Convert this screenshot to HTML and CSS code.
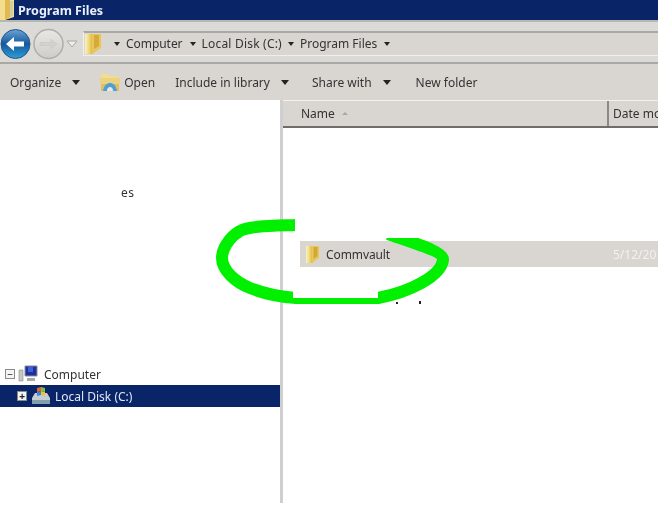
FILE: index.html
```html
<!DOCTYPE html>
<html lang="en">
<head>
<meta charset="utf-8">
<title>Program Files</title>
<link rel="stylesheet" href="styles.css">
</head>
<body>
<div class="window">
  <header class="titlebar">
    <svg class="title-icon" viewBox="0 0 14 20"><path d="M0 0h5l9 0v17l-9 3H0z" fill="#f2dd8e"/><path d="M5 0l5 0v17l-5 3z" fill="#e3b84e"/><path d="M10 1h3v15l-3 1z" fill="#c9cfa8"/></svg>
    <span class="title-text">Program Files</span>
  </header>
  <nav class="addressbar">
    <div class="nav-buttons">
      <svg class="nav-icon" viewBox="0 0 82 32">
        <defs>
          <linearGradient id="bk" x1="0" y1="0" x2="0" y2="1"><stop offset="0" stop-color="#6aa3d4"/><stop offset=".5" stop-color="#14599e"/><stop offset="1" stop-color="#2f9fd6"/></linearGradient>
          <linearGradient id="fw" x1="0" y1="0" x2="0" y2="1"><stop offset="0" stop-color="#e9e7e4"/><stop offset="1" stop-color="#cfcdca"/></linearGradient>
          <linearGradient id="fd" x1="0" y1="0" x2="1" y2="0"><stop offset="0" stop-color="#faf3c0"/><stop offset=".5" stop-color="#f0d878"/><stop offset="1" stop-color="#d9ae3c"/></linearGradient>
        </defs>
        <circle cx="15.500" cy="16" r="14.500" fill="url(#bk)" stroke="#24568c"/>
        <path d="M6 16l8-7v4.500h10v5H14V23z" fill="#fff"/>
        <circle cx="48.500" cy="16" r="14.500" fill="url(#fw)" stroke="#b0aeac" stroke-width="1.500"/>
        <path d="M40 14.500h11v-3l6 4.500-6 4.500v-3H40z" fill="#d4d2cf" stroke="#c4c2bf" stroke-width=".5"/>
        <path d="M67 13h10l-5 6z" fill="#efedea" stroke="#aaa8a6"/>
      </svg>
    </div>
    <div class="address-field">
      <svg class="addr-folder" viewBox="0 0 17 20"><path d="M0 0h8v20H0z" fill="url(#fd)"/><path d="M7 0h9v14l-9 6z" fill="#e8c65a"/><path d="M9 1h5v11l-5 3z" fill="#d6aa38"/></svg>
      <span class="crumb crumb-computer"><i class="caret"></i>Computer</span>
      <span class="crumb crumb-disk"><i class="caret"></i>Local Disk (C:)</span>
      <span class="crumb crumb-program"><i class="caret"></i>Program Files</span>
      <i class="caret"></i>
    </div>
  </nav>
  <div class="toolbar">
    <span class="tool tool-organize">Organize<i class="caret caret-wide"></i></span>
    <span class="tool tool-open">
      <svg class="open-icon" viewBox="0 0 20 19"><path d="M1 1h7l2 2h8v6H1z" fill="#f1dc94"/><path d="M0 5h20v6H0z" fill="#ecd27e"/><path d="M1 11h18v7H1z" fill="#e2bf5e"/><path d="M3 18c1-6 4-8 7-8s6 2 7 8z" fill="#4f9fd6"/><path d="M7 18c0-3 1.500-4 3-4s3 1 3 4z" fill="#e8e8e0"/></svg>Open
    </span>
    <span class="tool tool-library">Include in library<i class="caret caret-wide"></i></span>
    <span class="tool tool-share">Share with<i class="caret caret-wide"></i></span>
    <span class="tool">New folder</span>
  </div>
  <main class="panes">
    <aside class="tree">
      <div class="stray">es</div>
      <div class="tree-row tree-computer">
        <i class="expander">&#8722;</i>
        <svg class="tree-icon" viewBox="0 0 20 18"><path d="M7 1h12v10H7z" fill="#1f2f9c" stroke="#8a8f9c"/><path d="M10 2h5v5h-5z" fill="#3c62d8"/><path d="M1 5h4v11H1z" fill="#c9c9c4" stroke="#8c8c88" stroke-width=".6"/><path d="M9 13h8v3H9z" fill="#a8a8a4"/></svg>
        <span>Computer</span>
      </div>
      <div class="tree-row tree-disk">
        <i class="expander expander-dark">+</i>
        <svg class="tree-icon" viewBox="0 0 20 18"><path d="M1 11l3-5h12l3 5v6H1z" fill="#c3cdd2"/><path d="M1 13h18v4H1z" fill="#7fa0ac"/><path d="M6 1l4-1v4l-4 1z" fill="#e8632c"/><path d="M10 0l4 1v4l-4-1z" fill="#7fbf3e"/><path d="M6 5l4-1v4l-4 1z" fill="#3d84d6"/><path d="M10 4l4 1v4l-4-1z" fill="#f1c232"/></svg>
        <span>Local Disk (C:)</span>
      </div>
    </aside>
    <div class="divider"></div>
    <section class="list">
      <div class="list-header">
        <div class="col col-name">Name<i class="sort"></i></div>
        <div class="col col-date">Date mo</div>
      </div>
      <div class="list-row">
        <svg class="row-folder" viewBox="0 0 14 17"><path d="M0 0h7v17H0z" fill="url(#fd)"/><path d="M6 0h7v12l-7 5z" fill="#e8c65a"/><path d="M7.500 1h4v9l-4 3z" fill="#d2a835"/></svg>
        <span class="row-name">Commvault</span>
        <span class="row-date">5/12/20</span>
      </div>
    </section>
  </main>
  <svg class="scribble" viewBox="0 0 658 530">
    <defs>
      <clipPath id="scribble-clip"><path d="M200 210H295V232H293V298H378V238H460V310H200z"/></clipPath>
    </defs>
    <path clip-path="url(#scribble-clip)" fill="none" stroke="#00f000" stroke-width="12" stroke-linejoin="round" d="M296 225C270 226 250 226 240 231C228 238 222 250 222 258C222 270 235 282 250 288C265 294 280 297 296 298H378C410 292 441 276 443 260C444 252 420 245 388 234"/>
    <path fill="#222" d="M396 302h2v2h-2zM419 301h2v3h-2z"/>
  </svg>
</div>
</body>
</html>
```
FILE: styles.css
```css
* { box-sizing: border-box; }
html, body { margin: 0; padding: 0; background: #fff; }
.window {
  position: relative;
  width: 658px;
  height: 530px;
  overflow: hidden;
  display: flex;
  flex-direction: column;
  font-family: "Noto Sans", "Open Sans", sans-serif;
  font-size: 12px;
  color: #333;
}
i { font-style: normal; }
.titlebar {
  height: 20px;
  flex: none;
  display: flex;
  align-items: center;
  gap: 4px;
  background: #0a2468;
  color: #e8eefa;
  font-weight: 700;
  font-size: 12.5px;
}
.title-icon { width: 14px; height: 20px; }
.title-text { filter: blur(.3px); }
.addressbar {
  height: 44px;
  flex: none;
  display: flex;
  align-items: center;
  gap: 1px;
  padding: 3px 0 0 0;
  background: #dcdad6;
  border-top: 2px solid #b4b8b4;
  border-bottom: 2px solid #aaa8a5;
}
.nav-buttons { display: flex; }
.nav-icon { width: 82px; height: 32px; display: block; filter: blur(.3px); }
.address-field {
  flex: 1;
  height: 25px;
  margin-top: -1px;
  display: flex;
  align-items: center;
  background: #d9d6d1;
  border-top: 2px solid #aaa8a5;
  border-left: 1px solid #f2f1ee;
  border-bottom: 1px solid #f0efec;
  padding-left: 1px;
  filter: blur(.3px);
}
.addr-folder { width: 17px; height: 20px; margin-right: 12px; }
.crumb { display: flex; align-items: center; }
.crumb-computer { margin-right: 7px; letter-spacing: -.05px; }
.crumb-disk { margin-right: 6px; letter-spacing: .2px; }
.crumb-program { margin-right: 7px; }
.caret {
  display: inline-block;
  width: 0;
  height: 0;
  margin-right: 6px;
  border-left: 3.5px solid transparent;
  border-right: 3.5px solid transparent;
  border-top: 4px solid #222;
}
.toolbar {
  height: 36px;
  flex: none;
  display: flex;
  align-items: center;
  padding-left: 10px;
  background: #d9d6d1;
  filter: blur(.3px);
}
.tool { display: flex; align-items: center; }
.caret-wide {
  margin: 0 0 0 11px;
  border-left-width: 4.5px;
  border-right-width: 4.5px;
  border-top-width: 5px;
}
.tool-organize { margin-right: 20px; }
.tool-open { margin-right: 20px; }
.tool-library { margin-right: 23px; }
.tool-share { margin-right: 25px; }
.open-icon { width: 20px; height: 19px; margin-right: 4px; }
.panes {
  height: 403px;
  flex: none;
  display: flex;
  background: #fff;
}
.tree {
  width: 280px;
  flex: none;
  display: flex;
  flex-direction: column;
  border-top: 1px solid #fff;
}
.stray {
  margin: 83px 0 0 121px;
  height: 17px;
  line-height: 17px;
  font-size: 12px;
  letter-spacing: .5px;
  filter: blur(.3px);
}
.tree-row {
  height: 22px;
  display: flex;
  align-items: center;
}
.tree-computer { margin-top: 162px; padding-left: 5px; }
.tree-disk {
  padding-left: 17px;
  background: #0a2468;
  color: #dfe6f5;
}
.tree-row span { filter: blur(.25px); }
.tree-icon { width: 20px; height: 18px; margin: 0 6px 0 3px; }
.tree-disk .tree-icon { margin: 0 4px 0 4px; }
.expander {
  width: 10px;
  height: 10px;
  flex: none;
  display: flex;
  align-items: center;
  justify-content: center;
  font-size: 10px;
  line-height: 1;
  background: #f4f4f2;
  border: 1px solid #8a8a88;
  color: #222;
}
.expander-dark { background: #f4f4f2; font-weight: 700; }
.divider { width: 3px; flex: none; background: #cfcfcf; }
.list { flex: 1; min-width: 0; overflow: hidden; display: flex; flex-direction: column; }
.list-header {
  height: 28px;
  flex: none;
  display: flex;
  background: #d9d6d1;
  border-top: 1px solid #f2f1ee;
  border-bottom: 2px solid #6e6d6b;
  filter: blur(.25px);
}
.col { display: flex; align-items: center; flex: none; }
.col-name { width: 326px; padding-left: 18px; border-right: 2px solid #8a8987; }
.col-date { padding-left: 4px; white-space: nowrap; }
.sort {
  width: 0;
  height: 0;
  margin-left: 7px;
  border-left: 3px solid transparent;
  border-right: 3px solid transparent;
  border-bottom: 3px solid #a9a8a6;
}
.list-row {
  height: 26px;
  margin: 113px 0 0 17px;
  display: flex;
  align-items: center;
  padding-left: 6px;
  background: #d9d5d1;
  filter: blur(.25px);
}
.row-folder { width: 14px; height: 17px; margin-right: 6px; flex: none; }
.row-name { width: 287px; flex: none; letter-spacing: -.1px; }
.row-date { color: #f3f1ef; white-space: nowrap; }
.scribble {
  position: absolute;
  left: 0;
  top: 0;
  width: 658px;
  height: 530px;
  pointer-events: none;
}
```
